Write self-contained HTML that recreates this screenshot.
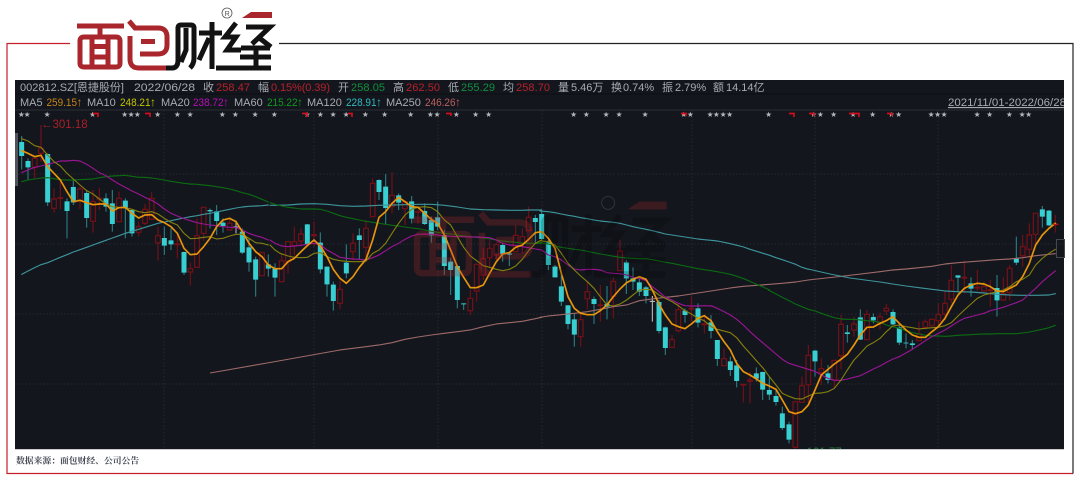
<!DOCTYPE html>
<html lang="zh">
<head>
<meta charset="utf-8">
<title>面包财经</title>
<style>
html,body{margin:0;padding:0;background:#fff;width:1080px;height:480px;overflow:hidden}
svg{display:block;filter:blur(.3px)}
text{font-family:"Liberation Sans","Noto Sans CJK SC",sans-serif;font-size:11px;fill:#a8acb1}
.r{fill:#b8202c}.g{fill:#128f3e}
.a{font-size:12px}
.tw{fill:none;stroke:#2d8088;stroke-width:3.2}
.tb{fill:none;stroke:#38cfd2;stroke-width:15}
.rw{fill:none;stroke:#7a0f18;stroke-width:3.2}
.rb{fill:#13161c;stroke:#7a0f18;stroke-width:3.4}
.o,.y,.p,.gr,.c,.k{fill:none;stroke-linejoin:round;stroke-linecap:round;stroke-width:3.4}
.o{stroke:#e8950c;stroke-width:5}
.y{stroke:#857f10}
.p{stroke:#9a1594}
.gr{stroke:#0b6a12}
.c{stroke:#3d959c}
.k{stroke:#9e6a6a}
</style>
</head>
<body>
<svg width="1080" height="480" viewBox="0 0 1080 480" xmlns="http://www.w3.org/2000/svg">
<defs>
<clipPath id="cl"><rect x="15" y="80" width="1049" height="369"/></clipPath>
<clipPath id="cd"><rect x="940" y="94" width="124" height="16"/></clipPath>
</defs>
<rect width="1080" height="480" fill="#fff"/>
<!-- frame -->
<path d="M70 43.5H7V473.5H1073" fill="none" stroke="#c4202c" stroke-width="1.2"/>
<path d="M279 43.5H1073V473.5" fill="none" stroke="#222" stroke-width="1.2"/>
<!-- logo -->
<g>
<title>面包财经</title>
<g fill="none" stroke="#a8262c" stroke-width="5" stroke-linecap="butt">
<path d="M77 26H124M100 26V37M84 37H116Q120 37 120 41V63Q120 67 116 67H84Q80 67 80 63V41Q80 37 84 37ZM92 37V67M108 37V67M92 46.5H108M92 57H108"/>
<path d="M129 21L135 28H158Q167 28 167 37V45Q167 54 158 54H140M141 41.5H155M130 36V59Q130 68 139 68H168"/>
</g>
<g fill="none" stroke="#121212" stroke-width="5">
<path d="M166 68H172Q178 68 178 60V28Q178 25 181 25H191Q194 25 194 28V58Q194 64 190 68M186 28V50L181 62"/>
<path d="M199 33H222M212 22V69M209 38L199 60"/>
<path d="M236 23L225 37H236L227 50H241M246 27H270L252 44M258 37L271 47M241 48H270M240 57H271M216 68H271M256 48V68"/>
</g>
<path d="M242 18L251 12H272V18Z" fill="#a8262c"/>
<circle cx="227" cy="13" r="5" fill="none" stroke="#555" stroke-width=".8"/>
<text x="224.6" y="16" style="font-size:7px;fill:#555">R</text>
</g>
<!-- chart -->
<rect x="15" y="80" width="1049" height="369" fill="#13161c"/>
<path d="M15 449.5H1064" stroke="#ccc" stroke-width="1"/>
<path d="M15 94H1064" stroke="#0d0f13" stroke-width="1"/>
<path d="M15 110H1064" stroke="#2b2e33" stroke-width="1"/>
<path d="M15 174H1064M15 244H1064M15 314H1064M15 384H1064M164 110V449M314 110V449M438 110V449M542 110V449M692 110V449M815 110V449M938 110V449" stroke="#262a30" stroke-width="1" stroke-dasharray="1.5 2" fill="none"/>
<rect x="15" y="133" width="3" height="53" fill="#50545a"/>
<rect x="1056.5" y="239.5" width="8" height="18" fill="none" stroke="#45484d" stroke-width="1"/>
<!-- header text -->
<g>
<text x="20" y="91">002812.SZ[恩捷股份]</text>
<text x="134" y="91" textLength="61" lengthAdjust="spacingAndGlyphs">2022/06/28</text>
<text x="203" y="91">收</text><text x="216" y="91" class="r" textLength="34">258.47</text>
<text x="258" y="91">幅</text><text x="271" y="91" class="r" textLength="59">0.15%(0.39)</text>
<text x="338" y="91">开</text><text x="351" y="91" class="g" textLength="34">258.05</text>
<text x="393" y="91">高</text><text x="406" y="91" class="r" textLength="34">262.50</text>
<text x="448" y="91">低</text><text x="461" y="91" class="g" textLength="34">255.29</text>
<text x="503" y="91">均</text><text x="516" y="91" class="r" textLength="34">258.70</text>
<text x="558" y="91">量</text><text x="571" y="91">5.46万</text>
<text x="611" y="91">换</text><text x="623" y="91">0.74%</text>
<text x="662" y="91">振</text><text x="675" y="91">2.79%</text>
<text x="713" y="91">额</text><text x="726" y="91">14.14亿</text>

<text x="20" y="106">MA5</text><text x="46.5" y="106" style="fill:#c8841a" textLength="30.5" lengthAdjust="spacingAndGlyphs">259.15</text><text x="76.5" y="106" class="a" style="fill:#c8841a">↑</text>
<text x="87" y="106">MA10</text><text x="120" y="106" style="fill:#c4c400" textLength="30.5" lengthAdjust="spacingAndGlyphs">248.21</text><text x="150" y="106" class="a" style="fill:#c4c400">↑</text>
<text x="161" y="106">MA20</text><text x="193" y="106" style="fill:#b80fb8" textLength="30.5" lengthAdjust="spacingAndGlyphs">238.72</text><text x="223" y="106" class="a" style="fill:#b80fb8">↑</text>
<text x="234" y="106">MA60</text><text x="267" y="106" style="fill:#0f9a1e" textLength="30.5" lengthAdjust="spacingAndGlyphs">215.22</text><text x="297" y="106" class="a" style="fill:#0f9a1e">↑</text>
<text x="307" y="106">MA120</text><text x="346" y="106" style="fill:#30bcc0" textLength="30.5" lengthAdjust="spacingAndGlyphs">228.91</text><text x="376" y="106" class="a" style="fill:#30bcc0">↑</text>
<text x="386" y="106">MA250</text><text x="425" y="106" style="fill:#bc6060" textLength="30.5" lengthAdjust="spacingAndGlyphs">246.26</text><text x="455" y="106" class="a" style="fill:#bc6060">↑</text>
</g>
<g clip-path="url(#cd)"><text x="948" y="106" textLength="118" lengthAdjust="spacingAndGlyphs" text-decoration="underline" style="font-size:11.3px">2021/11/01-2022/06/28</text></g>
<text y="117" x="18 23.7 43.7 89.3 121.3 127.7 134 154.3 174 186.7 219 232 251.7 271 303.7 317 329.7 342.7 362 381.3 407.3 427 433.7 453 472.3 485.3 570.3 583 602.7 615.7 641.7 680.3 687 706.7 713 719.7 726.3 765.3 810.3 817 830.3 849.7 869.3 888 895.3 927.7 934.3 940.7 973.7 986.3 1006 1018.7 1025.3" style="font-family:'DejaVu Sans',sans-serif;font-size:7.5px;fill:#b4b6b9">★★★★★★★★★★★★★★★★★★★★★★★★★★★★★★★★★★★★★★★★★★★★★★★★★★★★★</text>
<path d="M93 113.5H98V117M145 113.5H150V117M302 113.5H307V117M348 113.5H352V117M446 113.5H451V116M681 113.5H686V116M789 113.5H794V117M809 113.5H814V116M849 113.5H859V117M887 113.5H892V116" fill="none" stroke="#d00f1c" stroke-width="1.7"/>
<text x="41" y="128" class="r" style="fill:#a8202a;font-size:11.5px">←301.18</text>
<g clip-path="url(#cl)">
<text x="795" y="456" class="g" style="fill:#1d8040;font-size:11.5px">←161.77</text>
<!-- candles -->
<g transform="translate(0 130) scale(.33333)">
<path class="tw" d="M65 18V118M84 85V150M143 70V228M201 205V325M220 148V225M260 180V293M318 190V245M337 180V305M376 205V325M396 240V320M493 290V375M513 295V360M552 365V435M630 235V295M650 225V315M669 265V308M727 295V372M747 325V425M767 380V500M805 373V440"/>
<path class="tb" d="M65 36V78M84 93V112M143 72V217M201 214V243M220 171V217M260 189V264M318 205V230M337 220V282M376 212V235M396 240V310M493 324V347M513 331V343M552 366V428M630 240V244M650 244V273M669 278V288M727 305V368M747 352V397M767 388V449M805 403V416"/>
<path class="rw" d="M104 85V145M123 -15V95M162 175V248M181 155V238M240 170V237M279 180V308M298 173V240M357 185V275M416 275V320M435 222V285M455 185V268M474 290V392M532 310V385M571 398V467M591 265V412M611 232V333M689 265V300M786 365V437"/>
<path class="rb" d="M97 85h14v27h-14zM116 55h14v15h-14zM155 207h14v28h-14zM174 203h14v2h-14zM233 177h14v35h-14zM272 215h14v59h-14zM291 205h14v2h-14zM350 205h14v70h-14zM409 290h14v17h-14zM428 238h14v42h-14zM448 205h14v63h-14zM467 317h14v21h-14zM525 342h14v2h-14zM564 416h14v10h-14zM584 317h14v95h-14zM604 232h14v78h-14zM682 280h14v20h-14zM779 368h14v69h-14z"/>
<path d="M708 272V310M700 291H716" fill="none" stroke="#b8b8b8" stroke-width="3"/>
</g>
<g transform="translate(270 160) scale(.33333)">
<path class="tw" d="M15 310V410M112 192V258M151 217V340M171 320V410M190 365V452M229 253V355M268 205V298M327 58V120M347 42V192M386 100V150M425 108V190M464 130V195M484 170V248M503 125V210M523 210V345M542 295V405M562 318V445M581 430V450M698 250V305M718 280V318M796 165V250"/>
<path class="tb" d="M15 325V353M112 193V253M151 248V328M171 320V373M190 374V423M229 308V340M268 226V240M327 60V96M347 80V144M386 106V128M425 124V176M464 153V192M484 180V226M503 172V200M523 225V318M542 305V330M562 318V420M581 430V433M698 255V283M718 280V284M796 174V186"/>
<path class="rw" d="M35 280V368M54 245V340M73 200V285M93 205V260M132 185V260M210 362V448M249 220V300M288 180V295M308 55V170M366 37V160M405 125V195M444 150V192M601 390V465M620 310V425M640 265V360M659 240V325M679 250V300M737 195V275M757 205V280M776 140V212"/>
<path class="rb" d="M28 302h14v63h-14zM47 245h14v60h-14zM66 245h14v12h-14zM86 222h14v21h-14zM125 224h14v3h-14zM203 388h14v42h-14zM242 250h14v25h-14zM281 205h14v57h-14zM301 70h14v100h-14zM359 106h14v34h-14zM398 125h14v21h-14zM437 155h14v2h-14zM594 415h14v37h-14zM613 313h14v80h-14zM633 296h14v49h-14zM652 265h14v28h-14zM672 254h14v31h-14zM730 226h14v49h-14zM750 230h14v20h-14zM769 172h14v40h-14z"/>
</g>
<g transform="translate(540 190) scale(.33333)">
<path class="tw" d="M5 65V150M25 150V240M45 225V262M64 252V348M84 345V418M103 372V470M162 320V402M201 288V388M259 210V312M279 232V300M298 262V318M318 288V340M357 330V430M376 410V495M435 355V398M474 340V412M513 375V445"/>
<path class="tb" d="M5 72V147M25 157V225M45 230V262M64 289V335M84 346V402M103 388V434M162 327V342M201 342V350M259 217V265M279 265V275M298 277V305M318 292V318M357 336V423M376 412V474M435 362V375M474 355V398M513 397V423"/>
<path class="rw" d="M122 368V470M142 275V358M181 285V395M220 262V385M240 150V242M396 435V472M415 340V428M454 320V395M493 375V430"/>
<path class="rb" d="M115 389h14v51h-14zM135 305h14v21h-14zM174 345h14v2h-14zM213 274h14v45h-14zM233 183h14v59h-14zM389 449h14v23h-14zM408 359h14v63h-14zM447 355h14v2h-14zM486 402h14v2h-14z"/>
<path d="M337 318V395M329 334H345" fill="none" stroke="#c8c8c8" stroke-width="3"/>
</g>
<g transform="translate(700 290) scale(.33333)">
<path class="tw" d="M52 150V228M91 200V258M110 210V292M169 232V275M188 245V330M208 260V330M228 300V347M247 350V420M267 395V460M345 180V260M384 225V280M442 105V158M481 58V150M520 70V100M579 58V105M598 100V165"/>
<path class="tb" d="M52 150V207M91 214V240M110 226V273M169 250V266M188 246V299M208 300V314M228 318V336M247 370V414M267 403V449M345 182V214M384 250V270M442 127V132M481 82V149M520 81V91M579 66V103M598 112V158"/>
<path class="rw" d="M72 175V227M130 283V337M150 245V340M286 335V480M306 260V337M325 165V340M364 205V285M403 210V295M423 75V238M462 80V140M501 60V149M540 68V118M559 42V75"/>
<path class="rb" d="M65 206h14v21h-14zM123 283h14v2h-14zM143 270h14v4h-14zM279 335h14v137h-14zM299 287h14v50h-14zM318 196h14v88h-14zM357 236h14v12h-14zM396 211h14v59h-14zM416 103h14v94h-14zM455 102h14v18h-14zM494 73h14v76h-14zM533 80h14v20h-14zM552 55h14v8h-14z"/>
</g>
<g transform="translate(880 190) scale(.33333)">
<path class="tw" d="M78 430V475M97 450V480M234 256V308M273 262V320M351 255V380M409 140V225M487 48V113M507 60V108"/>
<path class="tb" d="M78 458V460M97 460V465M234 256V263M273 280V296M351 294V331M409 206V218M487 58V80M507 62V106"/>
<path class="rw" d="M117 395V452M136 388V412M156 385V410M175 340V410M195 305V390M214 225V340M253 212V310M292 240V303M312 275V305M331 270V350M370 262V332M389 225V332M428 135V230M448 100V205M467 70V160M526 75V128"/>
<path class="rb" d="M110 432h14v20h-14zM129 395h14v17h-14zM149 388h14v19h-14zM168 374h14v18h-14zM188 340h14v32h-14zM207 271h14v57h-14zM246 262h14v2h-14zM285 292h14v2h-14zM305 290h14v13h-14zM324 300h14v2h-14zM363 311h14v19h-14zM382 235h14v72h-14zM421 170h14v27h-14zM441 135h14v43h-14zM460 70h14v63h-14zM519 102h14v2h-14z"/>
</g>
<!-- moving averages -->
<polyline fill="none" stroke="#9e6a6a" stroke-width="1.1" points="210,373 270,362.5 340,350"/>
<polyline fill="none" stroke="#9e6a6a" stroke-width="1.1" points="808,280 840,276.5 880,271.7"/>
<polyline fill="none" stroke="#3d959c" stroke-width="1.1" points="808,269 830,274 850,278 880,282"/>
<g transform="translate(0 130) scale(.33333)">
<polyline class="c" points="65,433 84,423 104,413 123,404 143,398 162,390 181,382 201,374 220,366 240,359 260,352 279,345 298,338 318,331 337,324 357,317 376,310 396,304 416,298 435,292 455,286 474,280 493,276 513,272 532,268 552,264 571,260 591,257 611,253 630,250 650,246 669,242 689,238 708,234 727,231 747,229 767,228 786,227 805,225"/>
<polyline class="gr" points="65,155 84,150 104,147 123,144 143,143 162,146 181,149 201,150 220,150 240,149 260,148 279,147 298,143 318,140 337,138 357,137 376,136 396,139 416,142 435,142 455,144 474,147 493,150 513,154 532,157 552,160 571,162 591,163 611,165 630,167 650,170 669,173 689,177 708,182 727,188 747,193 767,200 786,208 805,216"/>
<polyline class="p" points="65,128 84,120 104,112 123,108 143,103 162,98 181,93 201,93 220,91 240,93 260,103 279,115 298,128 318,137 337,150 357,162 376,172 396,183 416,192 435,202 455,211 474,222 493,237 513,250 532,258 552,266 571,272 591,278 611,282 630,285 650,287 669,290 689,292 708,293 727,300 747,310 767,317 786,322 805,330"/>
<polyline class="y" points="65,26 84,33 104,47 123,52 143,75 162,95 181,108 201,130 220,147 240,165 260,182 279,192 298,207 318,222 337,230 357,232 376,233 396,238 416,245 435,248 455,245 474,252 493,265 513,277 532,285 552,310 571,326 591,325 611,322 630,320 650,327 669,325 689,318 708,313 727,313 747,325 767,338 786,340 805,345"/>
<polyline class="o" points="65,62 84,70 104,80 123,76 143,110 162,130 181,150 201,185 220,215 240,211 260,218 279,224 298,222 318,222 337,243 357,233 376,232 396,250 416,264 435,255 455,254 474,270 493,278 513,290 532,310 552,355 571,374 591,372 611,350 630,325 650,290 669,270 689,265 708,275 727,305 747,340 767,365 786,380 805,405"/>
</g>
<g transform="translate(270 160) scale(.33333)">
<polyline class="k" points="210,570 249,565 288,560 327,555 366,548 405,538 444,531 484,525 523,520 562,515 601,510 640,500 679,492 718,488 757,484 796,476 815,472"/>
<polyline class="c" points="0,136 15,136 54,135 93,132 132,131 171,133 210,137 249,139 288,138 327,136 366,135 405,134 444,133 484,133 523,136 562,141 601,147 640,149 679,150 718,151 757,151 776,150 815,150"/>
<polyline class="gr" points="0,128 15,133 35,138 54,142 73,144 93,147 112,147 132,147 151,148 171,153 190,160 210,167 229,172 249,176 268,180 288,184 308,187 327,190 347,193 366,196 386,198 405,201 425,204 444,206 464,210 484,214 503,217 523,220 542,222 562,225 581,228 601,230 620,232 640,234 659,237 679,240 698,243 718,245 737,247 757,249 776,250 796,250 815,250"/>
<polyline class="p" points="0,240 15,250 35,258 54,260 73,258 93,256 112,253 132,250 151,255 171,270 190,280 210,292 229,295 249,297 268,298 288,300 308,293 327,285 347,272 366,260 386,250 405,238 425,228 444,223 464,222 484,223 503,225 523,228 542,229 562,230 581,230 601,231 620,231 640,232 659,233 679,240 698,250 718,255 737,256 757,260 776,263 796,267 815,270"/>
<polyline class="y" points="0,255 15,270 30,280 54,288 73,292 93,293 112,292 132,280 151,278 171,290 190,298 210,302 229,304 249,305 268,305 288,303 308,280 327,270 347,250 366,220 386,190 405,165 425,148 444,142 464,140 484,143 503,155 523,180 542,195 562,230 581,262 601,288 620,302 640,317 659,322 679,328 698,332 718,328 737,318 757,298 776,272 796,250 815,240"/>
<polyline class="o" points="-5,315 0,318 15,326 35,326 54,305 73,295 93,275 112,257 132,240 151,258 171,290 190,328 210,355 229,370 249,350 268,322 288,298 308,240 327,172 347,155 366,130 386,112 405,125 425,140 444,142 464,160 484,178 503,190 523,225 542,270 562,320 581,352 601,383 620,383 640,375 659,340 679,305 698,282 718,278 737,262 757,255 776,238 796,218 815,215"/>
</g>
<g transform="translate(540 190) scale(.33333)">
<polyline class="k" points="0,382 25,378 64,374 103,370 142,365 181,358 220,350 260,345 298,332 337,327 376,322 415,318 454,312 493,306 532,300 571,294 611,289 650,286 689,283 727,280 767,276 805,270"/>
<polyline class="c" points="0,63 25,65 45,68 64,72 84,76 103,79 122,83 142,86 162,90 181,93 201,95 220,97 240,100 260,105 279,110 298,114 318,118 337,122 357,127 376,132 396,135 415,138 435,141 454,144 474,147 493,149 513,151 532,153 552,157 571,161 591,166 611,171 630,178 650,184 669,190 689,196 708,203 727,209 747,216 767,223 786,232 805,238"/>
<polyline class="gr" points="0,157 25,162 45,168 64,172 84,175 103,178 122,180 142,184 162,188 181,192 201,195 220,199 240,202 260,204 279,205 298,206 318,206 337,209 357,213 376,217 396,220 415,224 435,228 454,232 474,236 493,239 513,242 532,245 552,249 571,253 591,259 611,266 630,274 650,283 669,291 689,300"/>
<polyline class="p" points="5,180 25,195 45,200 64,210 84,225 103,237 122,240 142,238 162,238 181,240 201,248 220,250 240,251 260,255 279,262 298,265 318,272 337,290 357,305 376,322 396,330 415,340 435,347 454,348 474,348 493,347 513,348"/>
<polyline class="y" points="5,153 25,155 45,165 64,190 84,220 103,240 122,258 142,275 162,295 181,320 201,345 220,348 240,342 260,330 279,315 298,300 318,298 337,300 357,315 376,325 396,335 415,347 435,362 454,372 474,385 493,392 513,410"/>
<polyline class="o" points="5,125 25,145 45,175 64,250 84,320 103,355 122,370 142,374 162,374 181,362 201,345 220,320 240,297 260,278 279,268 298,260 318,268 337,300 357,342 376,375 396,402 415,410 435,416 454,402 474,385 493,377 513,392"/>
</g>
<g transform="translate(700 290) scale(.33333)">
<polyline class="gr" points="205,0 228,12 247,22 267,32 286,42 306,50 325,58 345,63 364,70 384,77 403,83 423,87 442,88 462,88 481,90 501,92 520,94 540,97"/>
<polyline class="p" points="33,47 52,55 72,65 91,75 110,88 130,105 150,125 169,142 188,158 208,175 228,192 247,208 267,220 286,226 306,232 325,238 345,244 364,255 384,265 403,271 423,271 442,267 462,262 481,257 501,247 520,237 540,228 559,217 579,207 598,200"/>
<polyline class="y" points="33,110 52,118 91,128 110,143 130,168 150,190 169,212 190,235 208,260 228,285 247,310 267,319 286,326 306,327 325,318 345,310 364,309 384,305 403,295 423,270 442,240 462,210 481,190 501,168 520,158 540,145"/>
<polyline class="o" points="33,92 52,125 72,155 91,180 110,220 130,245 150,255 169,267 188,280 208,288 228,298 247,330 267,365 286,371 306,365 325,345 345,300 364,255 384,238 403,222 423,208 442,193 462,165 481,135 501,112 520,111 540,100"/>
</g>
<g transform="translate(880 190) scale(.33333)">
<polyline class="k" points="0,245 38,240 78,237 117,233 156,229 195,222 234,218 273,215 312,212 351,209 389,207 428,203 467,197 507,193 526,191"/>
<polyline class="c" points="0,276 38,282 78,288 117,293 156,298 195,303 234,305 273,306 312,309 351,313 389,315 428,316 467,316 507,315 526,311"/>
<polyline class="gr" points="0,397 19,405 38,410 58,415 78,422 97,428 117,432 136,436 156,438 175,438 195,439 214,438 234,436 253,435 273,434 292,433 312,432 331,432 351,431 370,431 389,431 409,431 428,429 448,426 467,422 487,418 507,413 526,406"/>
<polyline class="p" points="58,500 97,478 117,465 136,452 156,440 175,430 195,420 214,408 234,395 253,385 273,380 292,375 312,370 331,362 351,357 370,352 389,345 409,338 428,330 448,312 467,295 487,275 507,258 526,243"/>
<polyline class="y" points="0,445 19,425 38,408 58,405 78,410 97,413 117,417 136,415 156,413 175,412 195,407 214,398 234,378 253,360 273,342 292,325 312,315 331,310 351,305 370,300 389,290 409,275 428,268 448,255 467,225 487,205 507,190 526,178"/>
<polyline class="o" points="0,400 19,392 38,380 58,400 78,420 97,435 117,442 136,442 156,425 175,410 195,385 214,350 234,315 253,295 273,285 292,280 312,282 331,290 351,303 370,305 389,295 409,285 428,260 448,220 467,165 487,135 507,115 526,100"/>
<path d="M519 103H535" stroke="#c00f1c" stroke-width="3" fill="none"/>
</g>
<!-- watermark -->
<g transform="translate(313 186) scale(1.3)">
<g fill="none" stroke="#b02a30" stroke-width="5" opacity=".26">
<path d="M77 26H124M100 26V37M84 37H116Q120 37 120 41V63Q120 67 116 67H84Q80 67 80 63V41Q80 37 84 37ZM92 37V67M108 37V67M92 46.5H108M92 57H108"/>
<path d="M129 21L135 28H158Q167 28 167 37V45Q167 54 158 54H140M141 41.5H155M130 36V59Q130 68 139 68H168"/>
<path d="M242 18L251 12H272V18Z" fill="#b02a30" stroke="none"/>
</g>
<g fill="none" stroke="#000" stroke-width="5" opacity=".18">
<path d="M166 68H172Q178 68 178 60V28Q178 25 181 25H191Q194 25 194 28V58Q194 64 190 68M186 28V50L181 62"/>
<path d="M199 33H222M212 22V69M209 38L199 60"/>
<path d="M236 23L225 37H236L227 50H241M246 27H270L252 44M258 37L271 47M241 48H270M240 57H271M216 68H271M256 48V68"/>
</g>
<circle cx="227" cy="13" r="5" fill="none" stroke="#555" stroke-width=".7" opacity=".5"/>
</g>
</g>
<!-- source -->
<text x="16" y="463.5" style="font-family:'Liberation Serif','Noto Serif CJK SC',serif;font-size:8.8px;font-weight:700;fill:#454a55">数据来源：面包财经、公司公告</text>
</svg>
</body>
</html>
